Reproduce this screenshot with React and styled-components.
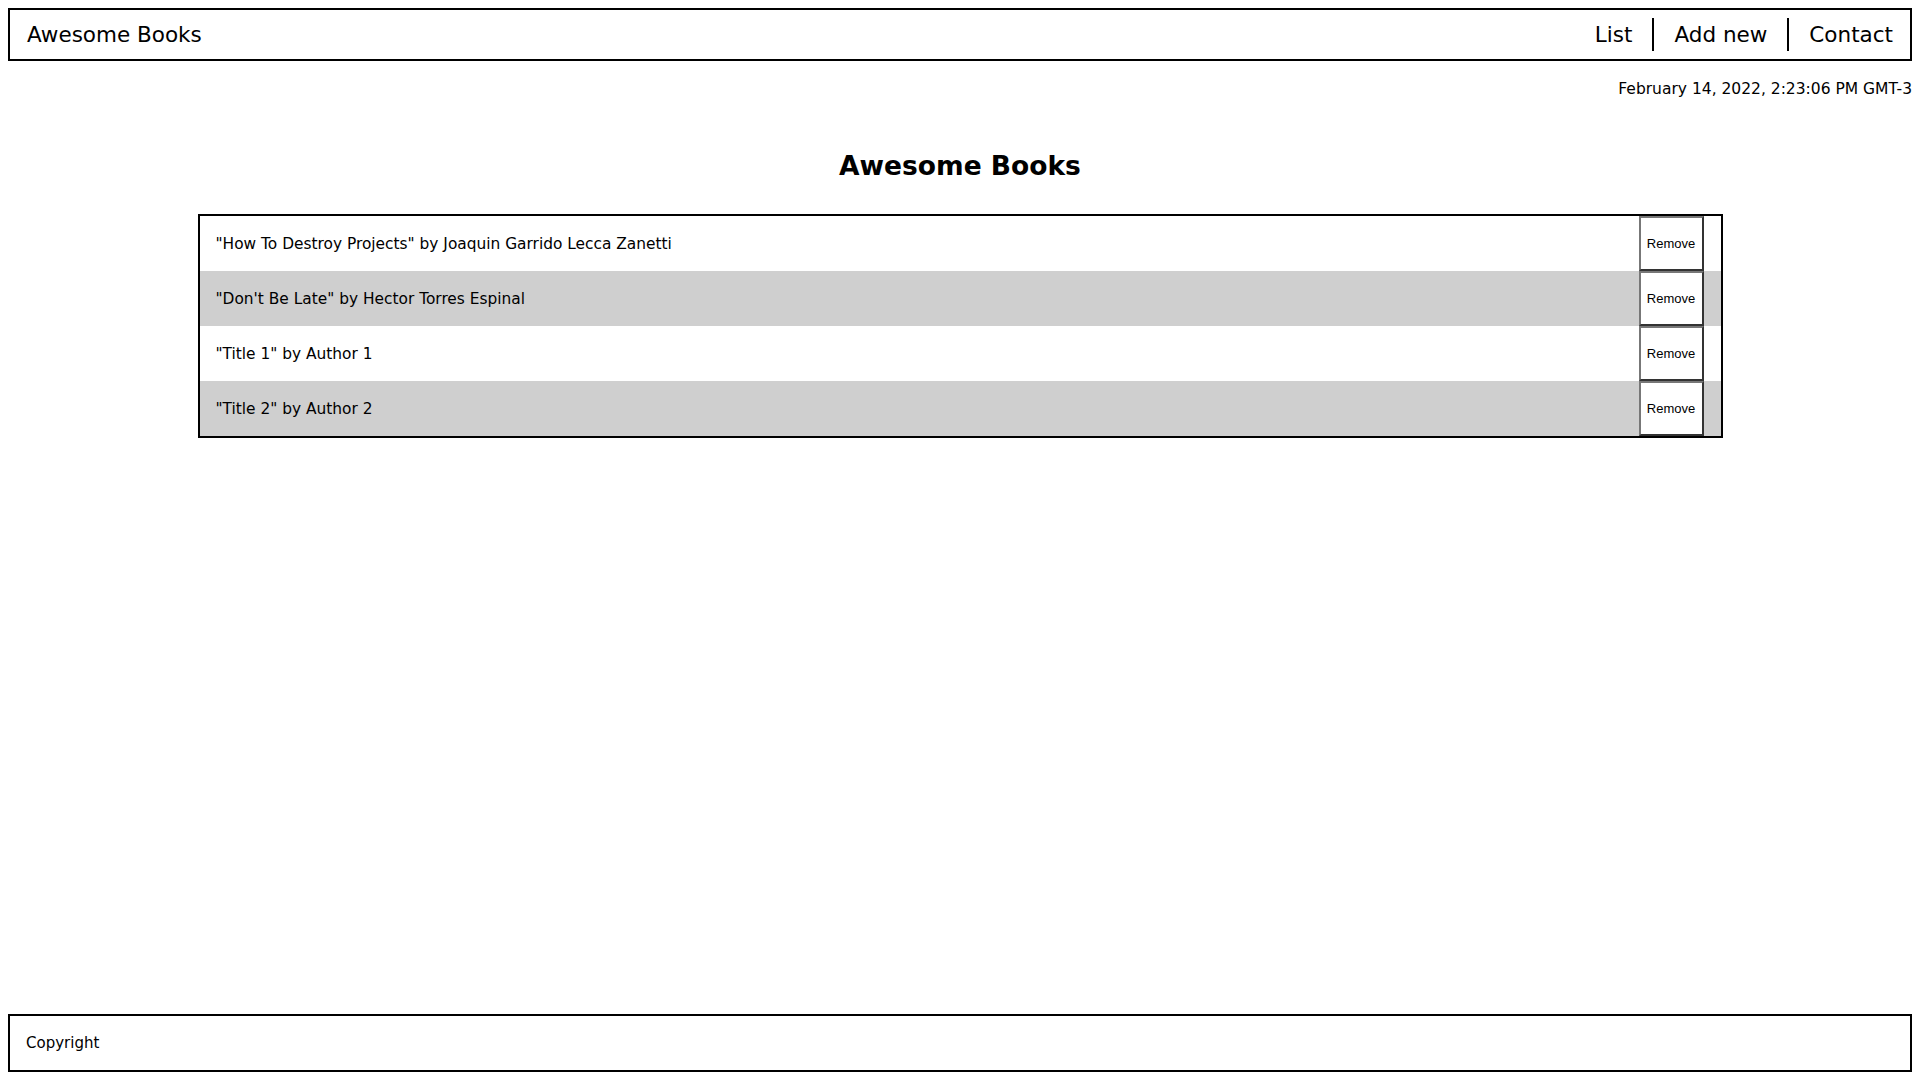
import React from "react";
import styled, { createGlobalStyle } from "styled-components";

const Global = createGlobalStyle`
  html, body { margin: 0; padding: 0; }
  body {
    margin: 8px;
    font-family: "Comic Sans MS", "DejaVu Sans", sans-serif;
    color: #000;
    background: #fff;
  }
`;

const Page = styled.div`
  display: flex;
  flex-direction: column;
  min-height: calc(100vh - 16px);
`;

const Header = styled.header`
  display: flex;
  align-items: center;
  justify-content: space-between;
  height: 53px;
  box-sizing: border-box;
  border: 2px solid #000;
  padding: 0 17px 0 17px;
`;

const Brand = styled.h2`
  margin: 0;
  font-size: 21.5px;
  font-weight: 400;
`;

const Nav = styled.ul`
  display: flex;
  list-style: none;
  margin: 0;
  padding: 0;
`;

const NavItem = styled.li`
  font-size: 21.5px;
  line-height: 33px;
  padding: 0 20px;
  border-left: ${(p) => (p.$first ? "none" : "2px solid #000")};
  &:last-child { padding-right: 0; }
`;

const DateLine = styled.p`
  margin: 19px 0 0;
  text-align: right;
  font-size: 15.5px;
`;

const Main = styled.main`
  flex: 1;
  display: flex;
  flex-direction: column;
  align-items: center;
`;

const Title = styled.h1`
  font-size: 26.5px;
  margin: 52px 0 33px;
`;

const List = styled.ul`
  list-style: none;
  margin: 0;
  padding: 0;
  width: 1525px;
  box-sizing: border-box;
  border: 2px solid #000;
`;

const Row = styled.li`
  display: flex;
  align-items: center;
  justify-content: space-between;
  height: 55px;
  padding: 0 17px 0 16px;
  background: ${(p) => (p.$alt ? "#cfcfcf" : "#fff")};
`;

const BookText = styled.span`
  font-size: 15.4px;
`;

const RemoveButton = styled.button`
  height: 55px;
  width: 65px;
  padding: 0;
  background: #fff;
  border: 2px solid;
  border-color: #777 #333 #333 #777;
  font-family: Arial, "Liberation Sans", sans-serif;
  font-size: 13px;
  color: #000;
`;

const Footer = styled.footer`
  height: 58px;
  box-sizing: border-box;
  border: 2px solid #000;
  display: flex;
  align-items: center;
  padding: 0 16px;
  font-size: 15px;
`;

const books = [
  ['"How To Destroy Projects"', "Joaquin Garrido Lecca Zanetti"],
  ['"Don\'t Be Late"', "Hector Torres Espinal"],
  ['"Title 1"', "Author 1"],
  ['"Title 2"', "Author 2"],
];

export default function App() {
  return (
    <>
      <Global />
      <Page>
        <Header>
          <Brand>Awesome Books</Brand>
          <Nav>
            <NavItem $first>List</NavItem>
            <NavItem>Add new</NavItem>
            <NavItem>Contact</NavItem>
          </Nav>
        </Header>
        <DateLine>February 14, 2022, 2:23:06 PM GMT-3</DateLine>
        <Main>
          <Title>Awesome Books</Title>
          <List>
            {books.map(([t, a], i) => (
              <Row key={i} $alt={i % 2 === 1}>
                <BookText>
                  {t} by {a}
                </BookText>
                <RemoveButton>Remove</RemoveButton>
              </Row>
            ))}
          </List>
        </Main>
        <Footer>Copyright</Footer>
      </Page>
    </>
  );
}
